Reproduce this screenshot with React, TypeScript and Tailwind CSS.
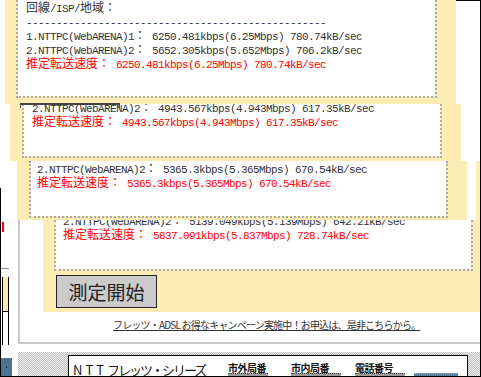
import type { ReactNode } from "react";

// one speed-test result panel (same block, repeated with different numbers)
type Result = { s1: string; s2: string; est: string };

const resA: Result = {
  s1: "6250.481kbps(6.25Mbps) 780.74kB/sec",
  s2: "5652.305kbps(5.652Mbps) 706.2kB/sec",
  est: "6250.481kbps(6.25Mbps) 780.74kB/sec",
};
const resB: Result = {
  s1: "4721.842kbps(4.721Mbps) 590.23kB/sec",
  s2: "4943.567kbps(4.943Mbps) 617.35kB/sec",
  est: "4943.567kbps(4.943Mbps) 617.35kB/sec",
};
const resC: Result = {
  s1: "5104.220kbps(5.104Mbps) 638.02kB/sec",
  s2: "5365.3kbps(5.365Mbps) 670.54kB/sec",
  est: "5365.3kbps(5.365Mbps) 670.54kB/sec",
};
const resD: Result = {
  s1: "5837.091kbps(5.837Mbps) 728.74kB/sec",
  s2: "5139.049kbps(5.139Mbps) 642.21kB/sec",
  est: "5837.091kbps(5.837Mbps) 728.74kB/sec",
};

function A({ children }: { children: ReactNode }) {
  return <span className="font-['Liberation_Mono',monospace] text-[11px] tracking-[-0.6px]">{children}</span>;
}

function K({ children }: { children: ReactNode }) {
  return <span className="font-['Noto_Sans_CJK_JP',sans-serif] text-[12px] tracking-normal">{children}</span>;
}

function Line({ red, children }: { red?: boolean; children: ReactNode }) {
  return (
    <div
      className={`h-[14px] shrink-0 text-[12px] leading-[14px] whitespace-pre ${red ? "text-[#ff0000]" : "text-[#333]"}`}
    >
      {children}
    </div>
  );
}

function Lines({ r }: { r: Result }) {
  return (
    <>
      <Line>
        <K>回線</K>
        <A>/ISP/</A>
        <K>地域：</K>
      </Line>
      <Line>
        <A>{"-".repeat(50)}</A>
      </Line>
      <Line>
        <A>1.NTTPC(WebARENA)1</A>
        <K>：</K>
        <A> {r.s1}</A>
      </Line>
      <Line>
        <A>2.NTTPC(WebARENA)2</A>
        <K>：</K>
        <A> {r.s2}</A>
      </Line>
      <Line red>
        <K>推定転送速度：</K>
        <A> {r.est}</A>
      </Line>
    </>
  );
}

const boxCls =
  "bg-white bg-clip-padding border-x-2 border-b-2 border-dotted border-[#a9a9a9] overflow-hidden flex flex-col justify-end";

function Panel({ outer, inner, r }: { outer: string; inner: string; r: Result }) {
  return (
    <div className={`${outer} bg-[#fdecb4] flex flex-col`}>
      <div className={`${inner} ${boxCls} flex-1 min-h-0`}>
        <Lines r={r} />
      </div>
    </div>
  );
}

function Sidebar() {
  return (
    <div className="w-[18px] shrink-0 flex flex-col">
      <div className="h-[188px] shrink-0" />
      <div className="flex-1 border-l border-black flex flex-col items-start">
        <div className="mt-[34px] ml-[1px] w-[2px] h-[10px] bg-[#ff0000]" />
        <div className="mt-[36px] w-[8px] h-[1px] bg-[#7890a0]" />
        <div className="mt-[8px] ml-[1px] w-[7px] h-[68px] border-x border-black flex flex-col">
          <div className="h-[34px] bg-[#fdecb4]" />
          <div className="flex-1 border-t border-black" />
        </div>
        <div className="mt-[13px] w-[11px] flex-1 bg-[#4a7394] flex items-center justify-center">
          <div className="w-[1px] h-[2px] bg-[#1c2c3a]" />
        </div>
      </div>
    </div>
  );
}

function Col({ label, w, bar }: { label: string; w: string; bar: string }) {
  return (
    <div className={`${w} shrink-0 pt-[6px] flex flex-col`}>
      <div className="text-[10px] leading-[11px] font-bold tracking-[-0.5px] text-[#111] whitespace-nowrap">{label}</div>
      <div className={`${bar} h-[4px] bg-[#9a9a9a] border-t border-dotted border-[#444]`} />
    </div>
  );
}

function SeriesBar() {
  return (
    <div className="h-[32px] pt-[8px] flex flex-col">
      <div className="flex-1 overflow-hidden pl-[50px] pt-[3px] bg-[repeating-conic-gradient(#c2c2c2_0%_25%,#ececec_0%_50%)] bg-size-[2px_2px]">
        <div className="w-[400px] h-[40px] bg-white border border-black flex">
          <div className="w-[159px] shrink-0 pl-[4px] pt-[5px] text-[13px] leading-[18px] whitespace-nowrap text-[#1a1a1a]">
            <span className="tracking-[3px]">NTT</span>
            <span className="tracking-[-2px]">フレッツ・シリーズ</span>
          </div>
          <Col label="市外局番" w="w-[63px]" bar="w-[40px]" />
          <Col label="市内局番" w="w-[64px]" bar="w-[50px]" />
          <Col label="電話番号" w="w-[59px]" bar="w-[50px]" />
          <div className="mt-[17px] w-[44px] h-[6px] bg-[#5b7fa0] border-t border-dotted border-[#a8c0d4]" />
        </div>
      </div>
    </div>
  );
}

export default function App() {
  return (
    <div className="relative w-[481px] h-[377px] overflow-hidden bg-white border-r border-b border-black flex font-['Noto_Sans_CJK_JP',sans-serif] text-[#333]">
      <Sidebar />

      <div className="flex-1 min-w-0 flex flex-col">
        {/* gray framed page body */}
        <div className="h-[344px] shrink-0 border-l-2 border-b-2 border-[#c8c8c8] flex flex-col">
          <div className="h-[220px] shrink-0" />

          {/* last result block with the start button */}
          <div className="ml-[23px] h-[92px] shrink-0 bg-[#fdecb4] pl-[11px] pr-[7px] flex flex-col items-start">
            <div className={`${boxCls} w-full h-[51px] shrink-0 pl-[7px] pb-[28px]`}>
              <Lines r={resD} />
            </div>
            <button className="mt-[4px] ml-[2px] w-[101px] h-[33px] border border-[#222] bg-[#cbcbcb] text-[19px] leading-none text-[#222] flex items-center justify-center">
              測定開始
            </button>
          </div>

          <div className="h-[30px] pt-[7px] pl-[93px] text-[10px] leading-[12px]">
            <a className="tracking-[-0.8px] underline text-[#333] whitespace-nowrap">
              フレッツ・ADSL お得なキャンペーン実施中！お申込は、是非こちらから。
            </a>
          </div>
        </div>

        <SeriesBar />
      </div>

      {/* stacked earlier result blocks drawn over the page */}
      <Panel outer="absolute left-[5px] top-0 w-[451px] h-[104px] pl-[11px] pr-[19px] pb-[6px]" inner="pl-[8px] pb-[26px]" r={resA} />
      <Panel outer="absolute left-[10px] top-[104px] w-[451px] h-[57px] pl-[12px] pr-[19px] pb-[3px]" inner="pl-[8px] pb-[28px]" r={resB} />
      <Panel outer="absolute left-[17px] top-[161px] w-[450px] h-[59px] pl-[12px] pr-[19px] pb-[2px]" inner="pl-[6px] pb-[27px]" r={resC} />

      <div className="absolute left-[20px] top-[103px] w-[100px] h-[5px] border-t-2 border-x border-[#444]" />
      <div className="absolute left-[476px] top-[161px] w-[4px] h-[59px] bg-[#fdecb4]" />
      <div className="absolute left-[456px] top-0 w-[25px] h-[1px] bg-black" />
    </div>
  );
}
